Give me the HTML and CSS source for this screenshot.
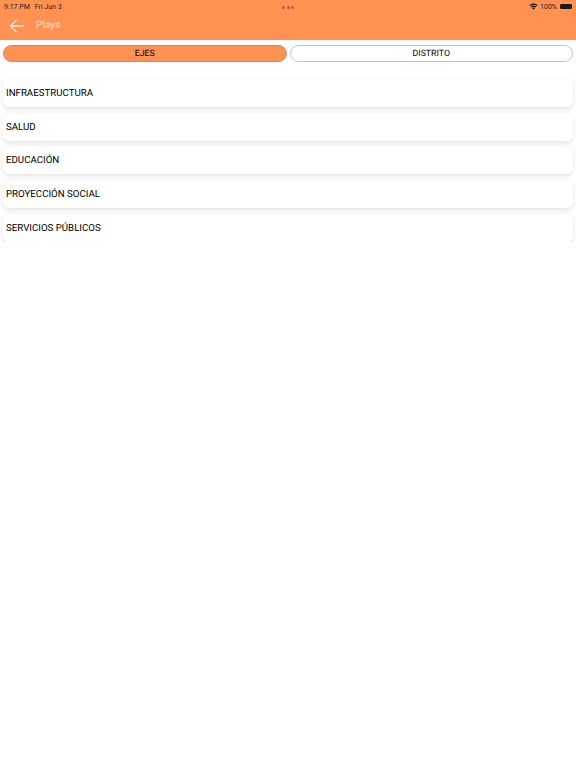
FILE: index.html
```html
<!DOCTYPE html>
<html lang="es">
<head>
    <meta charset="UTF-8">
    <meta name="viewport" content="width=device-width, initial-scale=1.0">
    <title>Plays</title>
    <link rel="stylesheet" href="styles.css">
</head>
<body>
    <div class="header">
        <div class="status-bar">
            <div class="status-left">
                <span>9:17 PM</span>
                <span>Fri Jun 3</span>
            </div>
            <div class="status-dots"><i></i><i></i><i></i></div>
            <div class="status-right">
                <svg class="wifi" width="9" height="7" viewBox="0 0 18 14">
                    <path d="M9 13.5 L6.4 10.6 C8 9.4 10 9.4 11.6 10.6 Z" fill="#1a1a1a"/>
                    <path d="M5.2 9.2 L3.4 7.2 C6.8 4.4 11.2 4.4 14.6 7.2 L12.8 9.2 C10.5 7.5 7.5 7.5 5.2 9.2 Z" fill="#1a1a1a"/>
                    <path d="M2.2 5.9 L0.5 4 C5.3 -0.2 12.7 -0.2 17.5 4 L15.8 5.9 C11.8 2.6 6.2 2.6 2.2 5.9 Z" fill="#1a1a1a"/>
                </svg>
                <span>100%</span>
                <div class="battery"></div>
            </div>
        </div>
        <div class="toolbar">
            <svg class="back" width="16" height="14" viewBox="0 0 16 14">
                <path d="M15 7 H1.5 M7.5 1 L1.5 7 L7.5 13" fill="none" stroke="#ffe9d6" stroke-width="1.3"/>
            </svg>
            <span class="title">Plays</span>
        </div>
    </div>

    <div class="tabs">
        <div class="tab active">EJES</div>
        <div class="tab">DISTRITO</div>
    </div>

    <div class="list">
        <div class="list-item">INFRAESTRUCTURA</div>
        <div class="list-item">SALUD</div>
        <div class="list-item">EDUCACIÓN</div>
        <div class="list-item">PROYECCIÓN SOCIAL</div>
        <div class="list-item">SERVICIOS PÚBLICOS</div>
    </div>
</body>
</html>
```

FILE: styles.css
```css
body {
    margin: 0;
    font-family: Roboto, "Liberation Sans", Arial, sans-serif;
    text-rendering: geometricPrecision;
    background: white;
    color: #000;
}

.header {
    height: 40px;
    background: #ff9152;
}

.status-bar {
    height: 13px;
    padding: 0 4px;
    display: grid;
    grid-template-columns: 1fr auto 1fr;
    align-items: center;
    font-size: 7px;
    color: #2a2018;
}

.status-left {
    display: flex;
    gap: 5px;
}

.status-dots {
    display: flex;
    gap: 1.5px;
    padding-top: 1px;
}

.status-dots i {
    width: 3px;
    height: 3px;
    border-radius: 50%;
    background: #a8603a;
}

.status-right {
    display: flex;
    justify-content: flex-end;
    align-items: center;
    gap: 2px;
}

.battery {
    width: 12px;
    height: 5px;
    margin-left: 1px;
    background: #1a1a1a;
    border-radius: 1.5px;
}

.toolbar {
    height: 25px;
    padding-left: 9px;
    display: flex;
    align-items: center;
}

.title {
    margin-left: 11px;
    font-size: 10.2px;
    color: #ffe3cc;
}

.tabs {
    margin: 5px 3px 0;
    display: flex;
    gap: 3px;
}

.tab {
    flex: 1;
    height: 15px;
    line-height: 16px;
    text-align: center;
    font-size: 8.8px;
    background: white;
    border: 1px solid #bcc4c0;
    border-radius: 9px;
}

.tab.active {
    background: #ff9152;
    border-color: #c98a68;
}

.list {
    margin-top: 17px;
    padding: 0 3px;
    display: flex;
    flex-direction: column;
    gap: 5.7px;
}

.list-item {
    height: 28px;
    line-height: 29px;
    padding-left: 3px;
    font-size: 9.7px;
    background: white;
    border-radius: 6px;
    box-shadow: 0 1.5px 4px rgba(0, 0, 0, 0.11);
}
```
